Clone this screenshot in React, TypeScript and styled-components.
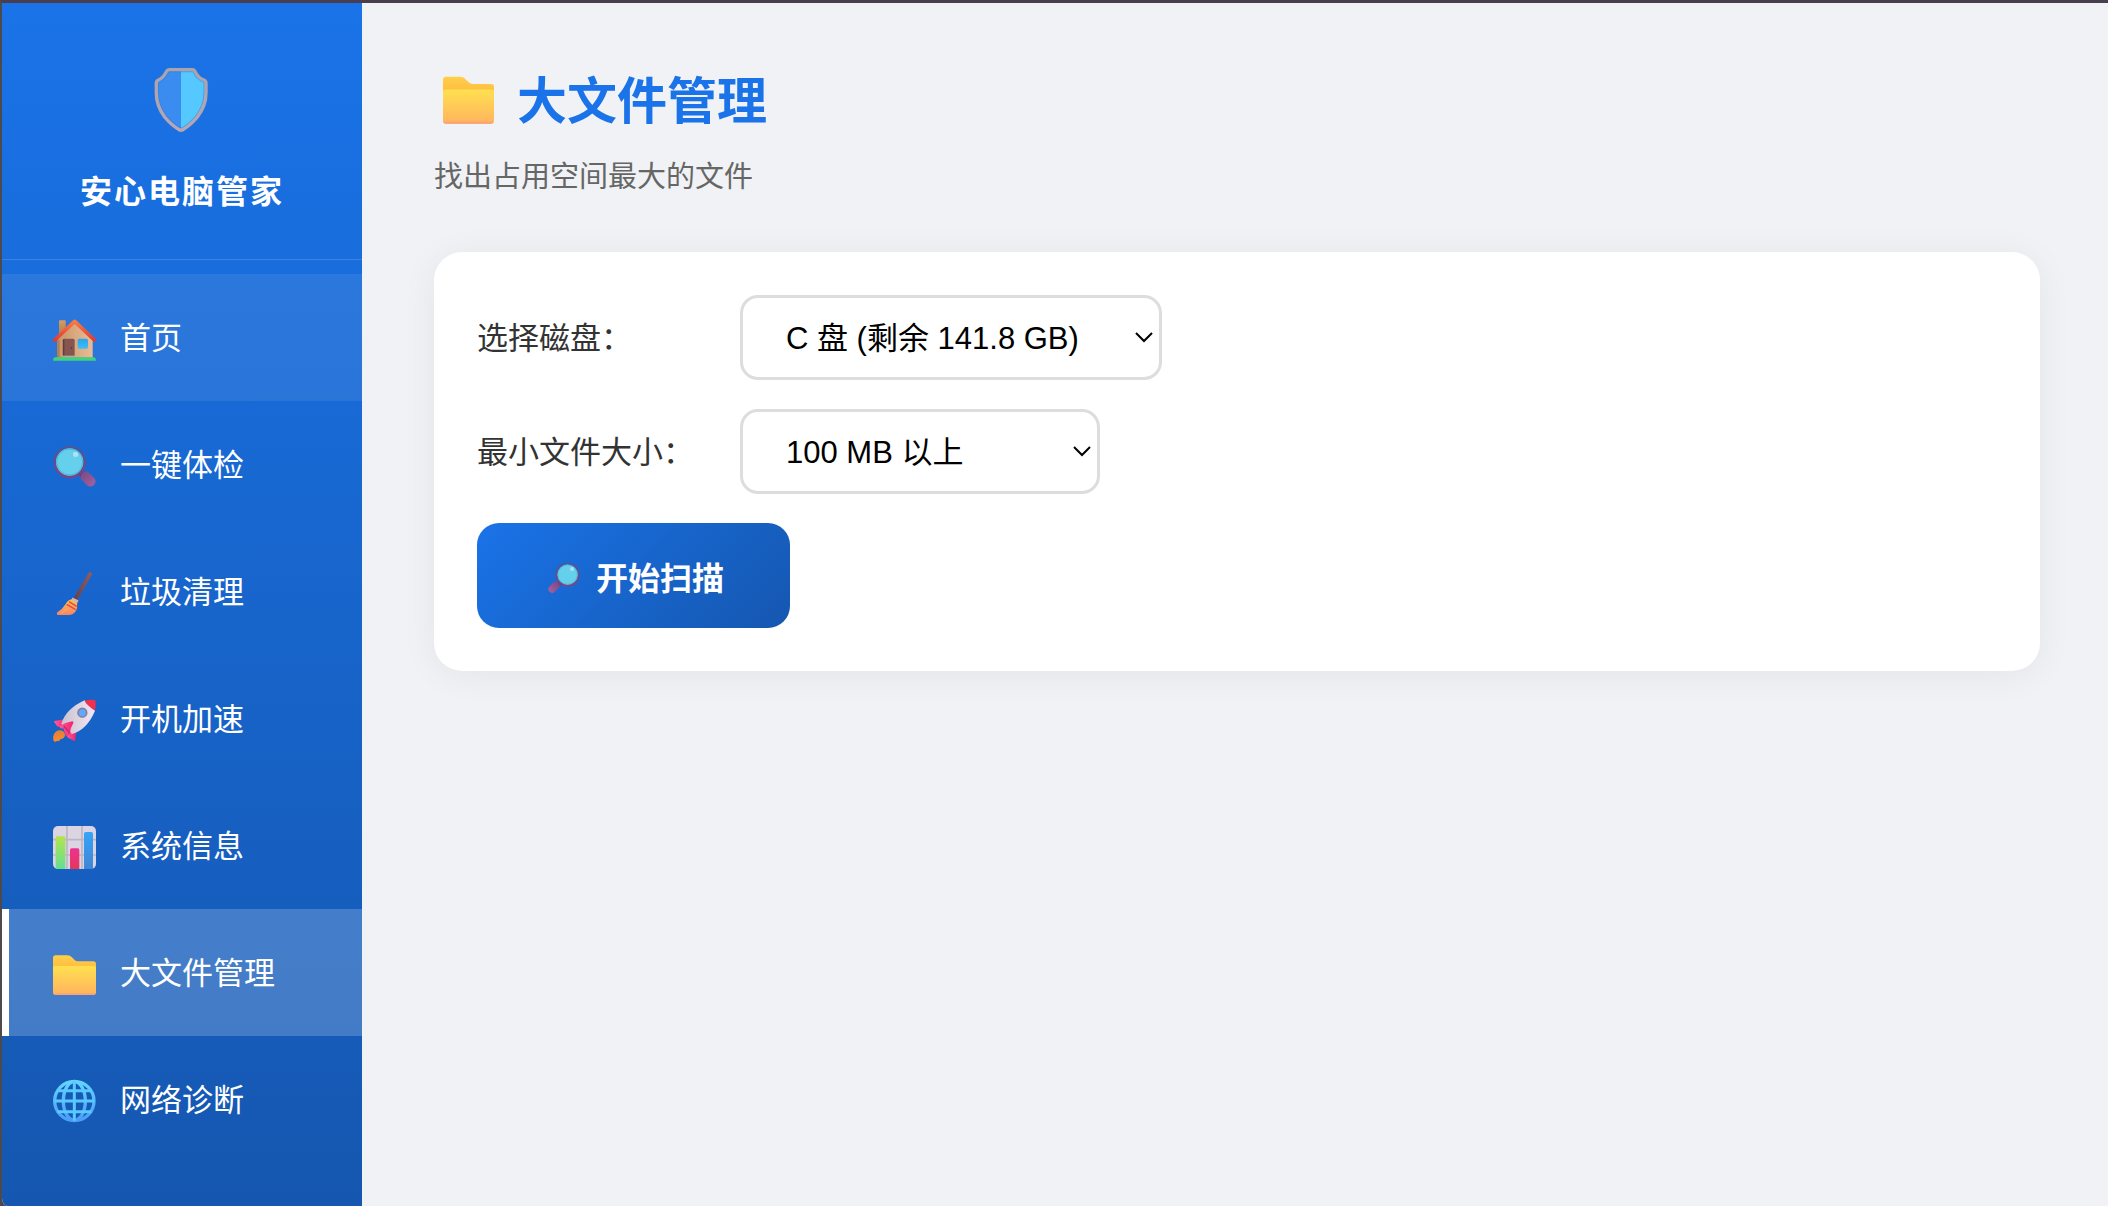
import React, { useState } from 'react';
import styled, { createGlobalStyle } from 'styled-components';

const uiFont = '"Noto Sans CJK SC", "Microsoft YaHei", sans-serif';
const controlFont = '"Liberation Sans", Arial, "Noto Sans CJK SC", sans-serif';

const GlobalStyle = createGlobalStyle`
  *, *::before, *::after {
    box-sizing: border-box;
  }
  body {
    margin: 0;
    background: #4c4a4c;
    color: #333;
    font-family: ${uiFont};
  }
`;

const Window = styled.div`
  display: flex;
  min-height: 100vh;
  overflow: hidden;
  background: #f0f2f5;
  border-top: 3px solid #483e4e;
  border-left: 2px solid #4c4a4c;
  border-bottom-left-radius: 8px;
`;

const Sidebar = styled.aside`
  flex: 0 0 360px;
  background: linear-gradient(180deg, #1a73e8 0%, #1557b0 100%);
  color: #fff;
`;

const Brand = styled.div`
  display: flex;
  flex-direction: column;
  align-items: center;
  gap: 33px;
  padding: 65px 0 46px;
  border-bottom: 1px solid rgba(255, 255, 255, 0.15);
`;

const BrandName = styled.div`
  font-size: 32px;
  line-height: 48px;
  font-weight: 700;
  letter-spacing: 2px;
`;

const Nav = styled.nav`
  display: flex;
  flex-direction: column;
  padding: 14px 0;
`;

const NavLink = styled.a<{ $state?: 'hover' | 'active' }>`
  display: flex;
  align-items: center;
  gap: 24px;
  height: 127px;
  padding-left: 44px;
  border-left: 7px solid ${(p) => (p.$state === 'active' ? '#fff' : 'transparent')};
  background: ${(p) =>
    p.$state === 'active'
      ? 'rgba(255, 255, 255, 0.2)'
      : p.$state === 'hover'
        ? 'rgba(255, 255, 255, 0.08)'
        : 'transparent'};
  background-clip: ${(p) => (p.$state === 'active' ? 'padding-box' : 'border-box')};
  color: #fff;
  font-size: 31px;
  line-height: 46px;
  text-decoration: none;
`;

const NavText = styled.span`
  padding-bottom: 3px;
`;

const Glyph = styled.svg<{ $size: number }>`
  flex: none;
  display: block;
  width: ${(p) => p.$size}px;
  height: ${(p) => p.$size}px;
  overflow: visible;
`;

const IconSlot = styled.span`
  flex: none;
  padding-top: 4px;
`;

const Main = styled.main`
  flex: 1;
  min-width: 0;
  padding: 58px 68px 58px 72px;
`;

const PageHeader = styled.header`
  display: grid;
  gap: 19px;
  margin-bottom: 56px;
`;

const Title = styled.h1`
  display: flex;
  align-items: center;
  gap: 23px;
  margin: 0;
  padding-left: 9px;
  color: #1a73e8;
  font-size: 50px;
  line-height: 72px;
  font-weight: 700;
`;

const Subtitle = styled.p`
  margin: 0;
  color: #666;
  font-size: 29px;
  line-height: 44px;
`;

const Card = styled.form`
  display: flex;
  flex-direction: column;
  align-items: flex-start;
  gap: 29px;
  padding: 43px;
  border-radius: 28px;
  background: #fff;
  box-shadow: 0 4px 36px rgba(0, 0, 0, 0.06);
`;

const Field = styled.div`
  display: flex;
  align-items: center;
  gap: 29px;
`;

const FieldLabel = styled.label`
  width: 234px;
  padding-bottom: 3px;
  font-size: 31px;
  line-height: 46px;
  white-space: nowrap;
`;

const SelectWrap = styled.div`
  position: relative;
`;

const Select = styled.select`
  appearance: none;
  display: block;
  min-width: 360px;
  height: 85px;
  padding: 1px 80px 0 43px;
  border: 3px solid #ddd;
  border-radius: 18px;
  background: #fff;
  color: #000;
  font-family: ${controlFont};
  font-size: 31px;
`;

const Chevron = styled.svg`
  position: absolute;
  right: 9px;
  top: 37px;
  width: 18px;
  height: 11px;
  pointer-events: none;
`;

const ScanButton = styled.button`
  display: flex;
  align-items: center;
  gap: 16px;
  height: 105px;
  padding: 0 66px 0 71px;
  border: 0;
  border-radius: 22px;
  background: linear-gradient(135deg, #1a73e8, #1557b0);
  color: #fff;
  font-family: ${uiFont};
  font-size: 32px;
  line-height: 48px;
  font-weight: 700;
  cursor: pointer;
`;

const HiddenDefs = styled.svg`
  position: absolute;
  width: 0;
  height: 0;
`;

type GradientStops = { id: string; from: string; to: string; horizontal?: boolean };

const gradients: GradientStops[] = [
  { id: 'folderBack', from: '#ffcf4a', to: '#ffb53a' },
  { id: 'folderFront', from: '#ffe04f', to: '#ffb35f' },
  { id: 'wall', from: '#c99468', to: '#e8bd96', horizontal: true },
  { id: 'chimney', from: '#d99b5e', to: '#a86f4c' },
  { id: 'roof', from: '#ff7a3c', to: '#dc3c37' },
  { id: 'pane', from: '#28a4ee', to: '#3fbdf8' },
  { id: 'ring', from: '#46599c', to: '#7a4585' },
  { id: 'handle', from: '#7c4a86', to: '#a2609d', horizontal: true },
  { id: 'stick', from: '#6c4048', to: '#8a5b63', horizontal: true },
  { id: 'bristle', from: '#ffc24c', to: '#f7836a' },
  { id: 'hull', from: '#c9c2ce', to: '#f2e6f6', horizontal: true },
  { id: 'fin', from: '#ff5b9a', to: '#f3216e', horizontal: true },
  { id: 'flame', from: '#d9813a', to: '#ff8a2b' },
  { id: 'barGreen', from: '#b4e34c', to: '#62df94' },
  { id: 'barPink', from: '#ef3190', to: '#e2385c' },
  { id: 'barBlue', from: '#35a5f8', to: '#4284d6' },
  { id: 'globe', from: '#62d4ff', to: '#4a9df8' },
  { id: 'shieldEdge', from: '#a9a3ad', to: '#b8a6b6' },
];

function IconDefs() {
  return (
    <HiddenDefs aria-hidden="true">
      <defs>
        {gradients.map((g) => (
          <linearGradient key={g.id} id={g.id} x1="0" y1="0" x2={g.horizontal ? 1 : 0} y2={g.horizontal ? 0 : 1}>
            <stop offset="0" stopColor={g.from} />
            <stop offset="1" stopColor={g.to} />
          </linearGradient>
        ))}
      </defs>
    </HiddenDefs>
  );
}

type IconProps = { size?: number };

function ShieldIcon() {
  const outline =
    'M44 5H113Q118 5 121 10Q129 29 149 37Q154 39 154 46V75Q154 113 128 147Q107 172 86 184Q79 189 72 184Q51 172 30 147Q5 113 5 75V46Q5 39 10 37Q27 29 35 11Q38 5 44 5Z';
  return (
    <Glyph $size={64} viewBox="-14 0 192 192" aria-hidden="true">
      <path d={outline} fill="#3a8cf0" />
      <path
        d="M79 5H113Q118 5 121 10Q129 29 149 37Q154 39 154 46V75Q154 113 128 147Q107 172 86 184Q83 187 79 187Z"
        fill="#55c8ff"
      />
      <path d={outline} fill="none" stroke="#2c78d4" strokeOpacity="0.5" strokeWidth="15" strokeLinejoin="round" />
      <path d={outline} fill="none" stroke="url(#shieldEdge)" strokeWidth="10" strokeLinejoin="round" />
    </Glyph>
  );
}

function HouseIcon({ size = 43 }: IconProps) {
  return (
    <Glyph $size={size} viewBox="0 -2 129 129" aria-hidden="true">
      <rect x="18" y="5" width="20" height="58" rx="3" fill="url(#chimney)" />
      <path d="M12 60L65 12L119 60V117H12Z" fill="url(#wall)" />
      <path d="M12 63H20V117H12Z" fill="#b67d52" />
      <path d="M5 64L65 8L124 64" fill="none" stroke="url(#roof)" strokeWidth="11" strokeLinecap="round" strokeLinejoin="round" />
      <rect x="29" y="60" width="36" height="54" rx="5" fill="#85564f" />
      <path d="M30 111V65Q30 61 34 61V111Z" fill="#603c3c" />
      <circle cx="55" cy="88" r="2" fill="#4c2c2e" />
      <rect x="74" y="60" width="31" height="30" rx="5" fill="url(#pane)" />
      <rect x="29" y="111" width="38" height="6" fill="#b9a8a8" />
      <path d="M5 116H124Q129 119 129 126H0Q0 119 5 116Z" fill="#3fd27b" />
    </Glyph>
  );
}

function MagnifierIcon({ size = 43, mirrored = false }: IconProps & { mirrored?: boolean }) {
  return (
    <Glyph $size={size} viewBox="0 0 129 129" aria-hidden="true">
      <g transform={mirrored ? 'translate(129 0) scale(-1 1)' : undefined}>
        <path d="M80 82L94 96" stroke="#5e3b78" strokeWidth="15" />
        <rect x="80" y="87" width="50" height="30" rx="14" fill="url(#handle)" transform="rotate(45 105 102)" />
        <circle cx="50" cy="51" r="45" fill="#64d0eb" stroke="url(#ring)" strokeWidth="8" />
        <circle cx="50" cy="51" r="39" fill="none" stroke="#48b4e2" strokeWidth="3" />
        <circle cx={mirrored ? 32 : 68} cy="28" r="8" fill="#b3def8" />
      </g>
    </Glyph>
  );
}

function BroomIcon({ size = 43 }: IconProps) {
  return (
    <Glyph $size={size} viewBox="0 0 129 129" aria-hidden="true">
      <path d="M111 6L66 84" stroke="url(#stick)" strokeWidth="12" strokeLinecap="round" />
      <path d="M57 82Q65 79 72 85Q73 98 72 108Q70 119 58 127Q54 129 47 129H14Q9 127 13 121Q29 111 38 96Q44 84 57 82Z" fill="url(#bristle)" />
      <path d="M57 80L75 89" stroke="#cdb5bd" strokeWidth="8" />
      <path d="M48 89L71 103M41 97L68 113" stroke="#e8463f" strokeWidth="4" fill="none" />
      <path d="M25 124L43 111" stroke="#ffb052" strokeWidth="3" />
    </Glyph>
  );
}

function RocketIcon({ size = 43 }: IconProps) {
  return (
    <Glyph $size={size} viewBox="0 0 129 129" aria-hidden="true">
      <path d="M16 94Q31 92 35 103Q39 115 26 120Q20 120 18 127Q14 124 11 127Q2 130 1 123Q-2 101 16 94Z" fill="url(#flame)" />
      <path d="M40 60L4 66Q2 67 5 71Q8 74 10 79Q12 84 20 84L34 87Z" fill="url(#fin)" />
      <path d="M70 88L67 122Q66 127 62 125Q55 120 46 117Q40 113 40 94Z" fill="url(#fin)" />
      <path d="M25 74Q39 29 95 4L126 35Q103 91 57 105Z" fill="url(#hull)" />
      <path d="M95 5Q114 0 126 3Q130 10 126 34Q121 33 110 23Q97 12 95 5Z" fill="#f0304d" />
      <path d="M31 88Q22 91 20 83Q32 71 52 68Q63 65 61 72Q52 87 51 101Q48 112 39 112Z" fill="url(#fin)" />
      <path d="M32 81L51 102" stroke="#c52d6c" strokeWidth="5" />
      <circle cx="88" cy="41" r="13" fill="#60a9ff" stroke="#847e9b" strokeWidth="5" />
    </Glyph>
  );
}

function ChartIcon({ size = 43 }: IconProps) {
  return (
    <Glyph $size={size} viewBox="0 0 129 129" aria-hidden="true">
      <rect width="129" height="129" rx="15" fill="#dad4e3" />
      <path d="M42 0V129M87 0V129M0 41H129M0 87H129" stroke="#bdb6c2" strokeWidth="5" />
      <path d="M8 129V36Q8 31 13 31H32Q37 31 37 36V129Z" fill="url(#barGreen)" />
      <path d="M51 129V72Q51 67 56 67H74Q79 67 79 72V129Z" fill="url(#barPink)" />
      <path d="M93 129V23Q93 18 98 18H115Q120 18 120 23V129Z" fill="url(#barBlue)" />
    </Glyph>
  );
}

function FolderIcon({ size = 43 }: IconProps) {
  return (
    <Glyph $size={size} viewBox="0 -2 129 129" aria-hidden="true">
      <path d="M0 13Q0 5 8 5H44Q51 5 56 10L65 19Q69 23 75 23H121Q129 23 129 31V60H0Z" fill="url(#folderBack)" />
      <path d="M0 43Q0 37 6 37H123Q129 37 129 43V116Q129 124 121 124H8Q0 124 0 116Z" fill="url(#folderFront)" />
      <path d="M1 119Q3 124 8 124H121Q126 124 128 119Z" fill="#fba372" />
    </Glyph>
  );
}

function GlobeIcon({ size = 43 }: IconProps) {
  return (
    <Glyph $size={size} viewBox="0 2 129 129" aria-hidden="true">
      <g fill="none" stroke="url(#globe)" strokeWidth="10">
        <circle cx="64" cy="65" r="59" />
        <ellipse cx="64" cy="65" rx="33" ry="58" />
      </g>
      <path d="M64 6V124M5 65H123M13 34H115M13 97H115" stroke="#59c9ff" strokeWidth="9" />
    </Glyph>
  );
}

const navItems: { label: string; icon: React.ReactNode; state?: 'hover' | 'active' }[] = [
  { label: '首页', icon: <HouseIcon />, state: 'hover' },
  { label: '一键体检', icon: <MagnifierIcon /> },
  { label: '垃圾清理', icon: <BroomIcon /> },
  { label: '开机加速', icon: <RocketIcon /> },
  { label: '系统信息', icon: <ChartIcon /> },
  { label: '大文件管理', icon: <FolderIcon />, state: 'active' },
  { label: '网络诊断', icon: <GlobeIcon /> },
];

type SelectFieldProps = { id: string; label: string; options: string[] };

function SelectField({ id, label, options }: SelectFieldProps) {
  const [value, setValue] = useState(options[0]);
  return (
    <Field>
      <FieldLabel htmlFor={id}>{label}</FieldLabel>
      <SelectWrap>
        <Select id={id} value={value} onChange={(e) => setValue(e.target.value)}>
          {options.map((option) => (
            <option key={option}>{option}</option>
          ))}
        </Select>
        <Chevron viewBox="0 0 18 11" aria-hidden="true">
          <path d="M1 1L9 9L17 1" fill="none" stroke="#000" strokeWidth="2" />
        </Chevron>
      </SelectWrap>
    </Field>
  );
}

export default function App() {
  return (
    <>
      <GlobalStyle />
      <IconDefs />
      <Window>
        <Sidebar>
          <Brand>
            <ShieldIcon />
            <BrandName>安心电脑管家</BrandName>
          </Brand>
          <Nav>
            {navItems.map((item) => (
              <NavLink
                key={item.label}
                href="#"
                $state={item.state}
                aria-current={item.state === 'active' ? 'page' : undefined}
              >
                <IconSlot>{item.icon}</IconSlot>
                <NavText>{item.label}</NavText>
              </NavLink>
            ))}
          </Nav>
        </Sidebar>
        <Main>
          <PageHeader>
            <Title>
              <IconSlot>
                <FolderIcon size={51} />
              </IconSlot>
              大文件管理
            </Title>
            <Subtitle>找出占用空间最大的文件</Subtitle>
          </PageHeader>
          <Card onSubmit={(e) => e.preventDefault()}>
            <SelectField id="disk" label="选择磁盘：" options={['C 盘 (剩余 141.8 GB)']} />
            <SelectField id="min-size" label="最小文件大小：" options={['100 MB 以上']} />
            <ScanButton type="submit">
              <IconSlot>
                <MagnifierIcon size={32} mirrored />
              </IconSlot>
              开始扫描
            </ScanButton>
          </Card>
        </Main>
      </Window>
    </>
  );
}
